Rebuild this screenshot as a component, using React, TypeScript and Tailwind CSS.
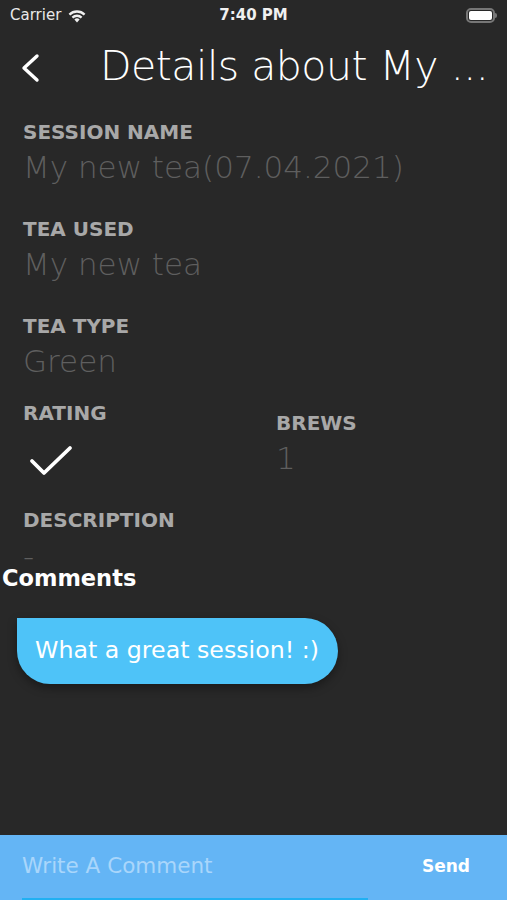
import React from "react";

const font = { fontFamily: '"DejaVu Sans", "Liberation Sans", sans-serif' };

function Label({ children }: { children: React.ReactNode }) {
  return <div className="text-[20px] leading-[24px] font-bold text-[#a8a8a8]">{children}</div>;
}

function Field({ label, value, className = "" }: { label: string; value: string; className?: string }) {
  return (
    <div className={className}>
      <Label>{label}</Label>
      <div className="mt-[5px] text-[31px] leading-[36px] font-extralight text-[#5f5f5f]">{value}</div>
    </div>
  );
}

export default function App() {
  return (
    <div className="w-[507px] h-[900px] bg-[#282828] flex flex-col overflow-hidden" style={font}>
      {/* status bar */}
      <div className="h-[30px] flex items-center justify-between px-[10px] text-white text-[15px]">
        <div className="flex items-center gap-[6px] w-[120px]">
          <span className="text-[#e8e8e8]">Carrier</span>
          <svg width="20" height="15" viewBox="0 0 20 15" fill="#f0f0f0">
            <path d="M10 14.5 7.4 11.6a3.7 3.7 0 0 1 5.2 0Z" />
            <path d="M4.6 8.8a7.7 7.7 0 0 1 10.8 0l-1.6 1.7a5.4 5.4 0 0 0-7.6 0Z" />
            <path d="M1.6 5.8a12 12 0 0 1 16.8 0l-1.6 1.7a9.7 9.7 0 0 0-13.6 0Z" />
          </svg>
        </div>
        <span className="font-bold text-[15px] text-[#f0f0f0]">7:40 PM</span>
        <div className="w-[120px] flex justify-end">
          <div className="flex items-center">
            <div className="w-[29px] h-[15px] rounded-[5px] border-[2px] border-[#777] p-[1px]">
              <div className="w-full h-full rounded-[2px] bg-white" />
            </div>
            <div className="w-[2px] h-[5px] rounded-r bg-[#777]" />
          </div>
        </div>
      </div>

      {/* header */}
      <div className="h-[72px] flex items-center">
        <svg width="60" height="40" viewBox="0 0 60 40" className="ml-[10px] shrink-0">
          <path d="M27 10 14 22l13 12" fill="none" stroke="white" strokeWidth="3.4" strokeLinecap="round" strokeLinejoin="round" />
        </svg>
        <div className="ml-[30px] text-white font-extralight text-[41px] leading-[48px] whitespace-nowrap tracking-[-0.5px]">
          Details about My ...
        </div>
      </div>

      {/* details */}
      <div className="px-[23px]">
        <Field label="SESSION NAME" value="My new tea(07.04.2021)" className="mt-[18px]" />
        <Field label="TEA USED" value="My new tea" className="mt-[32px]" />
        <Field label="TEA TYPE" value="Green" className="mt-[32px]" />
        <div className="grid grid-cols-[253px_1fr] mt-[22px]">
          <div>
            <Label>RATING</Label>
            <svg width="46" height="36" viewBox="0 0 46 36" className="mt-[19px] ml-[5px]">
              <path d="M4 17 16 29 42 4" fill="none" stroke="white" strokeWidth="3.8" strokeLinecap="round" strokeLinejoin="round" />
            </svg>
          </div>
          <Field label="BREWS" value="1" className="mt-[10px]" />
        </div>
        <div className="mt-[28px]">
          <Label>DESCRIPTION</Label>
          <div className="mt-[14px] h-[20px] text-[31px] leading-[20px] font-extralight text-[#5f5f5f]">-</div>
        </div>
      </div>

      {/* comments */}
      <div className="mt-[1px] px-[2px] text-white font-bold text-[22.5px] leading-[22px]">Comments</div>
      <div className="px-[17px] mt-[29px]">
        <div className="inline-flex items-center h-[66px] pl-[18px] pr-[19px] bg-[#4ec3f8] rounded-[33px] rounded-tl-none shadow-[0_4px_10px_rgba(0,0,0,0.35)]">
          <span className="text-white text-[23.7px]">What a great session! :)</span>
        </div>
      </div>

      <div className="flex-1" />

      {/* input bar */}
      <div className="h-[65px] bg-[#64b5f5] flex flex-col">
        <div className="flex-1 flex items-center justify-between pl-[22px] pr-[37px]">
          <span className="text-[#a9d6fb] text-[21.5px]">Write A Comment</span>
          <span className="text-white font-bold text-[17px]">Send</span>
        </div>
        <div className="ml-[22px] w-[346px] h-[2px] bg-[#21b0f2]" />
      </div>
    </div>
  );
}
